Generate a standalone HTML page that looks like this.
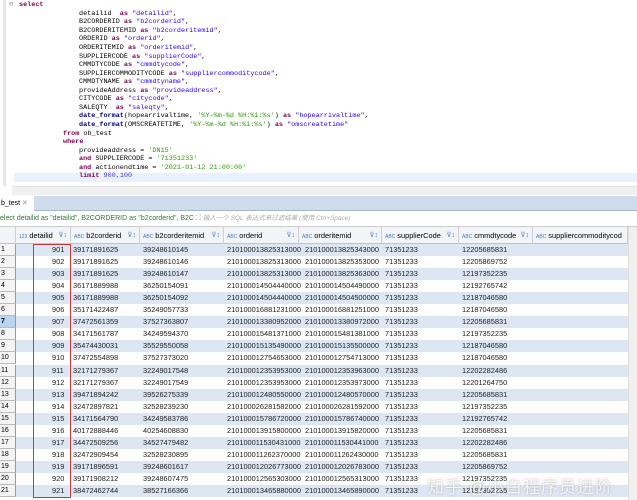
<!DOCTYPE html>
<html><head><meta charset="utf-8"><style>
*{margin:0;padding:0;box-sizing:border-box}
body{width:637px;height:500px;overflow:hidden;background:#fff;position:relative;font-family:"Liberation Sans","Noto Sans CJK SC",sans-serif}
.ed{position:absolute;left:0;top:0;width:637px;height:186px;background:#fff}
.gut{position:absolute;left:3px;top:0;width:3px;height:186px;background:#e8e8e8}
.ln{position:absolute;font-family:"Liberation Mono",monospace;font-size:6.8px;line-height:8.56px;white-space:pre;color:#000}
.k{color:#7f0055;font-weight:bold}.s{color:#2a00ff}.f{color:#000080;font-weight:bold}.n{color:#3c3cd0}.g{color:#2a9a00}
.hl{position:absolute;left:14px;top:172.5px;width:623px;height:9px;background:#e8f2fe}
.hs{position:absolute;left:12px;top:186px;width:625px;height:9px;background:#f0f0f0;border-top:1px solid #e2e2e2}
.tb{position:absolute;left:0;top:196px;width:637px;height:15px;background:#cfdcec;border-bottom:1px solid #a8b8cc}
.tab{position:absolute;left:0;top:196px;width:34px;height:15px;background:#fff;font-size:7px;line-height:15px;padding-left:1px;color:#000}
.fl{position:absolute;left:0;top:211px;width:637px;height:16px;background:#fff;border-bottom:1px solid #ccc;font-size:7px;line-height:16px;color:#2e7d32;white-space:nowrap}
.fl i{color:#aaa;font-style:italic;font-size:6.5px}
.hd{position:absolute;left:0;top:227px;width:628px;height:17px;background:#f2f4f7;border-bottom:1px solid #b8c4d4}
.c{position:absolute;top:0;height:17px;border-right:1px solid #c8d0dc;font-size:7.4px;line-height:17px;color:#000;white-space:nowrap;overflow:hidden}
.ic{color:#3b7ecb;font-size:5px;margin:0 2px 0 3px}
.ft{position:absolute;right:3px;top:0;color:#4a8ad0;font-size:7px}
.row{position:absolute;left:0;width:628px;height:12.05px;font-size:7.4px;line-height:12px;white-space:nowrap;color:#222}
.row.o{background:#dde7f3}
.row span{position:absolute;top:0}
.rn{left:0;width:16px;height:12px;background:#f4f4f4;border-right:1px solid #999;border-bottom:1px solid #bbb;padding-left:1px;font-size:7px;color:#000}
.sb{position:absolute;left:628px;top:227px;width:9px;height:273px;background:#f0f0f0;border-left:1px solid #ddd}
.red{position:absolute;left:33px;top:244px;width:38px;height:254px;border:1.5px solid #c83a3a}
.wm{position:absolute;left:427px;top:473px;font-size:17px;color:rgba(255,255,255,.85);text-shadow:0 0 2px rgba(120,120,120,.6);letter-spacing:1px}
</style></head><body>
<div class="ed">
<div class="gut"></div>
<div class="hl"></div>
<div class="ln" style="left:9px;top:0.7px;color:#888">⊖</div>
<div class="ln" style="left:19px;top:0.7px"><span class="k">select</span></div>
<div class="ln" style="left:79px;top:9.7px">detailid  <span class="k">as</span> <span class="s">"detailid"</span>,
B2CORDERID <span class="k">as</span> <span class="s">"b2corderid"</span>,
B2CORDERITEMID <span class="k">as</span> <span class="s">"b2corderitemid"</span>,
ORDERID <span class="k">as</span> <span class="s">"orderid"</span>,
ORDERITEMID <span class="k">as</span> <span class="s">"orderitemid"</span>,
SUPPLIERCODE <span class="k">as</span> <span class="s">"supplierCode"</span>,
CMMDTYCODE <span class="k">as</span> <span class="s">"cmmdtycode"</span>,
SUPPLIERCOMMODITYCODE <span class="k">as</span> <span class="s">"suppliercommoditycode"</span>,
CMMDTYNAME <span class="k">as</span> <span class="s">"cmmdtyname"</span>,
provideAddress <span class="k">as</span> <span class="s">"provideaddress"</span>,
CITYCODE <span class="k">as</span> <span class="s">"citycode"</span>,
SALEQTY  <span class="k">as</span> <span class="s">"saleqty"</span>,
<span class="f">date_format</span>(hopearrivaltime, <span class="g">'%Y-%m-%d %H:%i:%s'</span>) <span class="k">as</span> <span class="s">"hopearrivaltime"</span>,
<span class="f">date_format</span>(OMSCREATETIME, <span class="g">'%Y-%m-%d %H:%i:%s'</span>) <span class="k">as</span> <span class="s">"omscreatetime"</span></div>
<div class="ln" style="left:63px;top:129.5px"><span class="k">from</span> ob_test
<span class="k">where</span></div>
<div class="ln" style="left:79px;top:146.6px">provideaddress = <span class="g">'DN15'</span>
<span class="k">and</span> SUPPLIERCODE = <span class="g">'71351233'</span>
<span class="k">and</span> actionendtime = <span class="g">'2021-01-12 21:00:00'</span>
<span class="k">limit</span> <span class="n">900,100</span></div>
</div>
<div class="hs"></div>
<div class="tb"></div>
<div class="tab">b_test <span style="color:#999">✕</span></div>
<div class="fl">elect detailid as "detailid", B2CORDERID as "b2corderid", B2C <span style="color:#888">⛶</span> <i>输入一个 SQL 表达式来过滤结果 (使用 Ctrl+Space)</i></div>
<div class="hd">
<div class="c" style="left:0;width:16px"></div>
<div class="c" style="left:16px;width:55px"><span class="ic">123</span>detailid<span class="ft">⊽↕</span></div>
<div class="c" style="left:71px;width:69px"><span class="ic">ABC</span>b2corderid<span class="ft">⊽↕</span></div>
<div class="c" style="left:140px;width:84px"><span class="ic">ABC</span>b2corderitemid<span class="ft">⊽↕</span></div>
<div class="c" style="left:224px;width:75px"><span class="ic">ABC</span>orderid<span class="ft">⊽↕</span></div>
<div class="c" style="left:299px;width:83px"><span class="ic">ABC</span>orderitemid<span class="ft">⊽↕</span></div>
<div class="c" style="left:382px;width:77px"><span class="ic">ABC</span>supplierCode<span class="ft">⊽↕</span></div>
<div class="c" style="left:459px;width:74px"><span class="ic">ABC</span>cmmdtycode<span class="ft">⊽↕</span></div>
<div class="c" style="left:533px;width:95px"><span class="ic">ABC</span>suppliercommoditycod</div>
</div>
<div id="rows"></div>
<div class="sb"></div>
<div class="red"></div>
<div class="wm">知乎 @小白程序员进阶</div>
<script>
var d=[["39171891625","39248610145","210100013825313000","210100013825343000","12205685831"],
["39171891625","39248610146","210100013825313000","210100013825353000","12205869752"],
["39171891625","39248610147","210100013825313000","210100013825363000","12197352235"],
["36171889988","36250154091","210100014504440000","210100014504490000","12192765742"],
["36171889988","36250154092","210100014504440000","210100014504500000","12187046580"],
["35171422487","35249057733","210100016881231000","210100016881251000","12187046580"],
["37472561359","37527363807","210100013380952000","210100013380972000","12205685831"],
["34171561787","34249594370","210100015481371000","210100015481381000","12197352235"],
["35474430031","35529550058","210100015135490000","210100015135500000","12187046580"],
["37472554898","37527373020","210100012754653000","210100012754713000","12187046580"],
["32171279367","32249017548","210100012353953000","210100012353963000","12202282486"],
["32171279367","32249017549","210100012353953000","210100012353973000","12201264750"],
["39471894242","39526275339","210100012480550000","210100012480570000","12205685831"],
["32472897821","32528239230","210100026281582000","210100026281592000","12197352235"],
["34171564790","34249583786","210100015786720000","210100015786740000","12192765742"],
["40172888446","40254608830","210100013915800000","210100013915820000","12205685831"],
["34472509256","34527479482","210100011530431000","210100011530441000","12202282486"],
["32472909454","32528230895","210100011262370000","210100011262430000","12205685831"],
["39171896591","39248601617","210100012026773000","210100012026783000","12205869752"],
["39171908212","39248607475","210100012565303000","210100012565313000","12197352235"],
["38472462744","38527166366","210100013465880000","210100013465890000","12197352235"]];
var h="";for(var i=0;i<21;i++){var r=d[i],t=244+i*12.05;
h+='<div class="row'+(i%2==0?' o':'')+'" style="top:'+t+'px"><span class="rn" style="'+(i==6?'background:#bcd4f0;font-weight:bold':'')+'">'+(i+1)+'</span><span style="left:52px">'+(901+i)+'</span><span style="left:73px">'+r[0]+'</span><span style="left:143px">'+r[1]+'</span><span style="left:227px">'+r[2]+'</span><span style="left:305px">'+r[3]+'</span><span style="left:385px">71351233</span><span style="left:462px">'+r[4]+'</span></div>';}
document.getElementById('rows').innerHTML=h;
</script>
</body></html>
